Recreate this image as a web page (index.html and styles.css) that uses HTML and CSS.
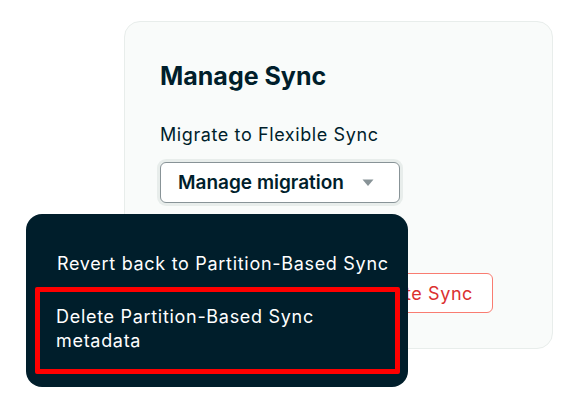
FILE: index.html
```html
<!DOCTYPE html>
<html lang="en">
<head>
<meta charset="utf-8">
<link rel="stylesheet" href="styles.css">
</head>
<body>
<div class="page">
  <section class="card">
    <h2 class="title">Manage Sync</h2>
    <p class="label">Migrate to Flexible Sync</p>
    <div class="select-ring">
      <button class="select">
        <span>Manage migration</span>
        <svg class="caret" width="12" height="8" viewBox="0 0 12 8"><path d="M0.5 0.5h11L6 7z" fill="#889397"/></svg>
      </button>
    </div>
    <div class="danger-row">
      <button class="danger">Terminate Sync</button>
    </div>
  </section>
  <div class="menu">
    <div class="menu-item">Revert back to Partition-Based Sync</div>
    <div class="menu-item highlighted">Delete Partition-Based Sync metadata</div>
  </div>
</div>
</body>
</html>
```
FILE: styles.css
```css
* { box-sizing: border-box; }
html, body { margin: 0; padding: 0; background: #ffffff; }
body { font-family: Inter, "Liberation Sans", sans-serif; }
.page {
  position: relative;
  width: 580px;
  height: 411px;
  padding: 21px 0 0 124px;
}
.card {
  width: 429px;
  height: 328px;
  background: #f9fbfa;
  border: 1px solid #e8edeb;
  border-radius: 16px;
  padding: 39px 0 0 35px;
}
.title {
  margin: 0;
  font-size: 25px;
  line-height: 30px;
  font-weight: 700;
  color: #001e2b;
}
.label {
  margin: 32px 0 0;
  font-size: 18px;
  line-height: 24px;
  letter-spacing: 0.6px;
  color: #001e2b;
}
.select-ring {
  margin: 12px 0 0 -3px;
  display: inline-block;
  padding: 3px;
  border-radius: 9px;
  background: #e8edeb;
}
.select {
  display: flex;
  align-items: center;
  width: 240px;
  height: 41px;
  padding: 0 0 0 17px;
  border: 1px solid #889397;
  border-radius: 6px;
  background: #ffffff;
  font-family: inherit;
  font-size: 19px;
  font-weight: 600;
  color: #001e2b;
}
.caret { margin-left: 18px; }
.danger-row {
  display: flex;
  justify-content: flex-end;
  width: 333px;
  margin-top: 67px;
}
.danger {
  height: 40px;
  padding: 0 19px;
  border: 1px solid #f97c71;
  border-radius: 6px;
  background: #ffffff;
  font-family: inherit;
  font-size: 18px;
  letter-spacing: 0.6px;
  color: #db3030;
}
.menu {
  position: absolute;
  left: 26px;
  top: 214px;
  width: 382px;
  height: 173px;
  background: #001e2b;
  border-radius: 16px;
  padding: 38px 8px 0 9px;
}
.menu-item {
  color: #ffffff;
  font-size: 18px;
  line-height: 24px;
  letter-spacing: 0.7px;
  padding: 0 10px 0 22px;
}
.highlighted {
  margin-top: 11px;
  border: 5px solid #ff0000;
  border-radius: 2px;
  padding: 13px 40px 16px 16px;
}
```
